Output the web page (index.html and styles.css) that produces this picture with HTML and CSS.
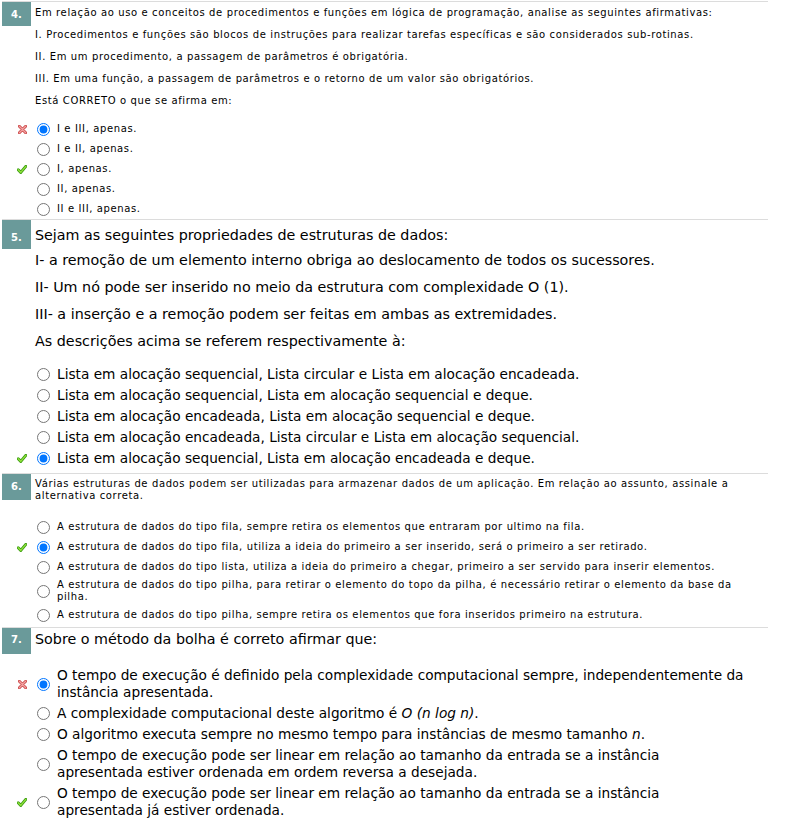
FILE: index.html
```html
<!DOCTYPE html>
<html lang="pt">
<head>
<meta charset="utf-8">
<title>Questões</title>
<link rel="stylesheet" href="styles.css">
</head>
<body>
<svg width="0" height="0" class="defs">
  <defs>
    <symbol id="ico-x" viewBox="0 0 10 10">
      <path d="M1.5 1.5 L8.5 8.5 M8.5 1.5 L1.5 8.5" stroke="#c83c3c" stroke-width="3.2" stroke-linecap="round"/>
      <path d="M1.5 1.5 L8.5 8.5 M8.5 1.5 L1.5 8.5" stroke="#f0a0a0" stroke-width="1.6" stroke-linecap="round"/>
    </symbol>
    <symbol id="ico-ok" viewBox="0 0 10 9">
      <path d="M1.2 4.8 L3.8 7.4 L8.8 1.4" fill="none" stroke="#3a9a12" stroke-width="3" stroke-linecap="round" stroke-linejoin="round"/>
      <path d="M1.2 4.8 L3.8 7.4 L8.8 1.4" fill="none" stroke="#8ee03a" stroke-width="1.4" stroke-linecap="round" stroke-linejoin="round"/>
    </symbol>
  </defs>
</svg>

<section class="q q4 small">
  <div class="qhead">
    <div class="badge">4.</div>
    <div class="qbody">
      <p>Em relação ao uso e conceitos de procedimentos e funções em lógica de programação, analise as seguintes afirmativas:</p>
      <p>I. Procedimentos e funções são blocos de instruções para realizar tarefas específicas e são considerados sub-rotinas.</p>
      <p>II. Em um procedimento, a passagem de parâmetros é obrigatória.</p>
      <p>III. Em uma função, a passagem de parâmetros e o retorno de um valor são obrigatórios.</p>
      <p>Está CORRETO o que se afirma em:</p>
    </div>
  </div>
  <ul class="opts">
    <li><span class="mark"><svg class="ix"><use href="#ico-x"/></svg></span><input type="radio" name="q4" checked><span class="lbl">I e III, apenas.</span></li>
    <li><span class="mark"></span><input type="radio" name="q4"><span class="lbl">I e II, apenas.</span></li>
    <li><span class="mark"><svg class="iok"><use href="#ico-ok"/></svg></span><input type="radio" name="q4"><span class="lbl">I, apenas.</span></li>
    <li><span class="mark"></span><input type="radio" name="q4"><span class="lbl">II, apenas.</span></li>
    <li><span class="mark"></span><input type="radio" name="q4"><span class="lbl">II e III, apenas.</span></li>
  </ul>
</section>

<section class="q q5 big">
  <div class="qhead">
    <div class="badge">5.</div>
    <div class="qbody">
      <p>Sejam as seguintes propriedades de estruturas de dados:</p>
      <p>I- a remoção de um elemento interno obriga ao deslocamento de todos os sucessores.</p>
      <p>II- Um nó pode ser inserido no meio da estrutura com complexidade O (1).</p>
      <p>III- a inserção e a remoção podem ser feitas em ambas as extremidades.</p>
      <p>As descrições acima se referem respectivamente à:</p>
    </div>
  </div>
  <ul class="opts">
    <li><span class="mark"></span><input type="radio" name="q5"><span class="lbl">Lista em alocação sequencial, Lista circular e Lista em alocação encadeada.</span></li>
    <li><span class="mark"></span><input type="radio" name="q5"><span class="lbl">Lista em alocação sequencial, Lista em alocação sequencial e deque.</span></li>
    <li><span class="mark"></span><input type="radio" name="q5"><span class="lbl">Lista em alocação encadeada, Lista em alocação sequencial e deque.</span></li>
    <li><span class="mark"></span><input type="radio" name="q5"><span class="lbl">Lista em alocação encadeada, Lista circular e Lista em alocação sequencial.</span></li>
    <li><span class="mark"><svg class="iok"><use href="#ico-ok"/></svg></span><input type="radio" name="q5" checked><span class="lbl">Lista em alocação sequencial, Lista em alocação encadeada e deque.</span></li>
  </ul>
</section>

<section class="q q6 small">
  <div class="qhead">
    <div class="badge">6.</div>
    <div class="qbody">
      <p>Várias estruturas de dados podem ser utilizadas para armazenar dados de um aplicação. Em relação ao assunto, assinale a alternativa correta.</p>
    </div>
  </div>
  <ul class="opts">
    <li><span class="mark"></span><input type="radio" name="q6"><span class="lbl">A estrutura de dados do tipo fila, sempre retira os elementos que entraram por ultimo na fila.</span></li>
    <li><span class="mark"><svg class="iok"><use href="#ico-ok"/></svg></span><input type="radio" name="q6" checked><span class="lbl">A estrutura de dados do tipo fila, utiliza a ideia do primeiro a ser inserido, será o primeiro a ser retirado.</span></li>
    <li><span class="mark"></span><input type="radio" name="q6"><span class="lbl">A estrutura de dados do tipo lista, utiliza a ideia do primeiro a chegar, primeiro a ser servido para inserir elementos.</span></li>
    <li><span class="mark"></span><input type="radio" name="q6"><span class="lbl">A estrutura de dados do tipo pilha, para retirar o elemento do topo da pilha, é necessário retirar o elemento da base da pilha.</span></li>
    <li><span class="mark"></span><input type="radio" name="q6"><span class="lbl">A estrutura de dados do tipo pilha, sempre retira os elementos que fora inseridos primeiro na estrutura.</span></li>
  </ul>
</section>

<section class="q q7 big">
  <div class="qhead">
    <div class="badge">7.</div>
    <div class="qbody">
      <p>Sobre o método da bolha é correto afirmar que:</p>
    </div>
  </div>
  <ul class="opts">
    <li><span class="mark"><svg class="ix"><use href="#ico-x"/></svg></span><input type="radio" name="q7" checked><span class="lbl">O tempo de execução é definido pela complexidade computacional sempre, independentemente da instância apresentada.</span></li>
    <li><span class="mark"></span><input type="radio" name="q7"><span class="lbl">A complexidade computacional deste algoritmo é <i>O (n log n)</i>.</span></li>
    <li><span class="mark"></span><input type="radio" name="q7"><span class="lbl">O algoritmo executa sempre no mesmo tempo para instâncias de mesmo tamanho <i>n</i>.</span></li>
    <li><span class="mark"></span><input type="radio" name="q7"><span class="lbl">O tempo de execução pode ser linear em relação ao tamanho da entrada se a instância apresentada estiver ordenada em ordem reversa a desejada.</span></li>
    <li><span class="mark"><svg class="iok"><use href="#ico-ok"/></svg></span><input type="radio" name="q7"><span class="lbl">O tempo de execução pode ser linear em relação ao tamanho da entrada se a instância apresentada já estiver ordenada.</span></li>
  </ul>
</section>
</body>
</html>
```

FILE: styles.css
```css
html, body {
  margin: 0;
  background: #fff;
}
body {
  padding: 1px 2px 0 2px;
  font-family: "DejaVu Sans", Verdana, sans-serif;
  color: #000;
}
.defs {
  position: absolute;
  width: 0;
  height: 0;
}
.q {
  width: 766px;
  border-top: 1px solid #dcdcdc;
}
.qhead {
  display: flex;
  align-items: flex-start;
}
.badge {
  flex: 0 0 29px;
  box-sizing: border-box;
  background: #6a9a9a;
  color: #fff;
  font-weight: bold;
  font-size: 10px;
  line-height: 12px;
  letter-spacing: 0;
  text-align: center;
}
.qbody {
  flex: 1;
  margin-left: 4px;
}
.qbody p {
  margin: 0;
}
.opts {
  list-style: none;
  margin: 0;
  padding: 0;
}
.opts li {
  display: flex;
  align-items: center;
  padding: 2px 0;
  min-height: 16px;
}
.mark {
  flex: 0 0 10px;
  height: 10px;
  margin-left: 15px;
  display: flex;
  align-items: center;
  justify-content: center;
}
.mark svg {
  display: block;
}
.ix { width: 9px; height: 9px; }
.iok { width: 10px; height: 9px; }
.opts input {
  flex: 0 0 13px;
  width: 13px;
  height: 13px;
  margin: 0 7px 0 10px;
}
.lbl {
  flex: 1;
}

/* small-text questions */
.small {
  font-size: 10px;
  line-height: 12px;
  letter-spacing: 0.62px;
}
.small .qbody p + p { margin-top: 10px; }
.small .lbl { padding-right: 30px; }

/* large-text questions */
.big {
  font-size: 13.7px;
  line-height: 17px;
}
.big .qbody {
  font-size: 14.3px;
}
.big .qbody p + p { margin-top: 10px; }
.big .lbl { padding-right: 21px; }

.q4 .badge { height: 24px; padding-top: 7px; }
.q4 .qbody { padding-top: 5px; }
.q4 .opts { padding-top: 12px; }

.q5 .badge { height: 29px; padding-top: 12px; }
.q5 .qbody { padding-top: 7px; }
.q5 .qbody p:nth-child(2) { margin-top: 8px; }
.q5 .opts { padding-top: 14px; padding-bottom: 4px; }

.q6 .badge { height: 26px; padding-top: 7px; }
.q6 .qbody { padding-top: 4px; }
.q6 .opts { padding-top: 15px; padding-bottom: 2px; }

.q7 .badge { height: 26px; padding-top: 6px; }
.q7 .qbody { padding-top: 3px; }
.q7 .opts { padding-top: 11px; }
```
